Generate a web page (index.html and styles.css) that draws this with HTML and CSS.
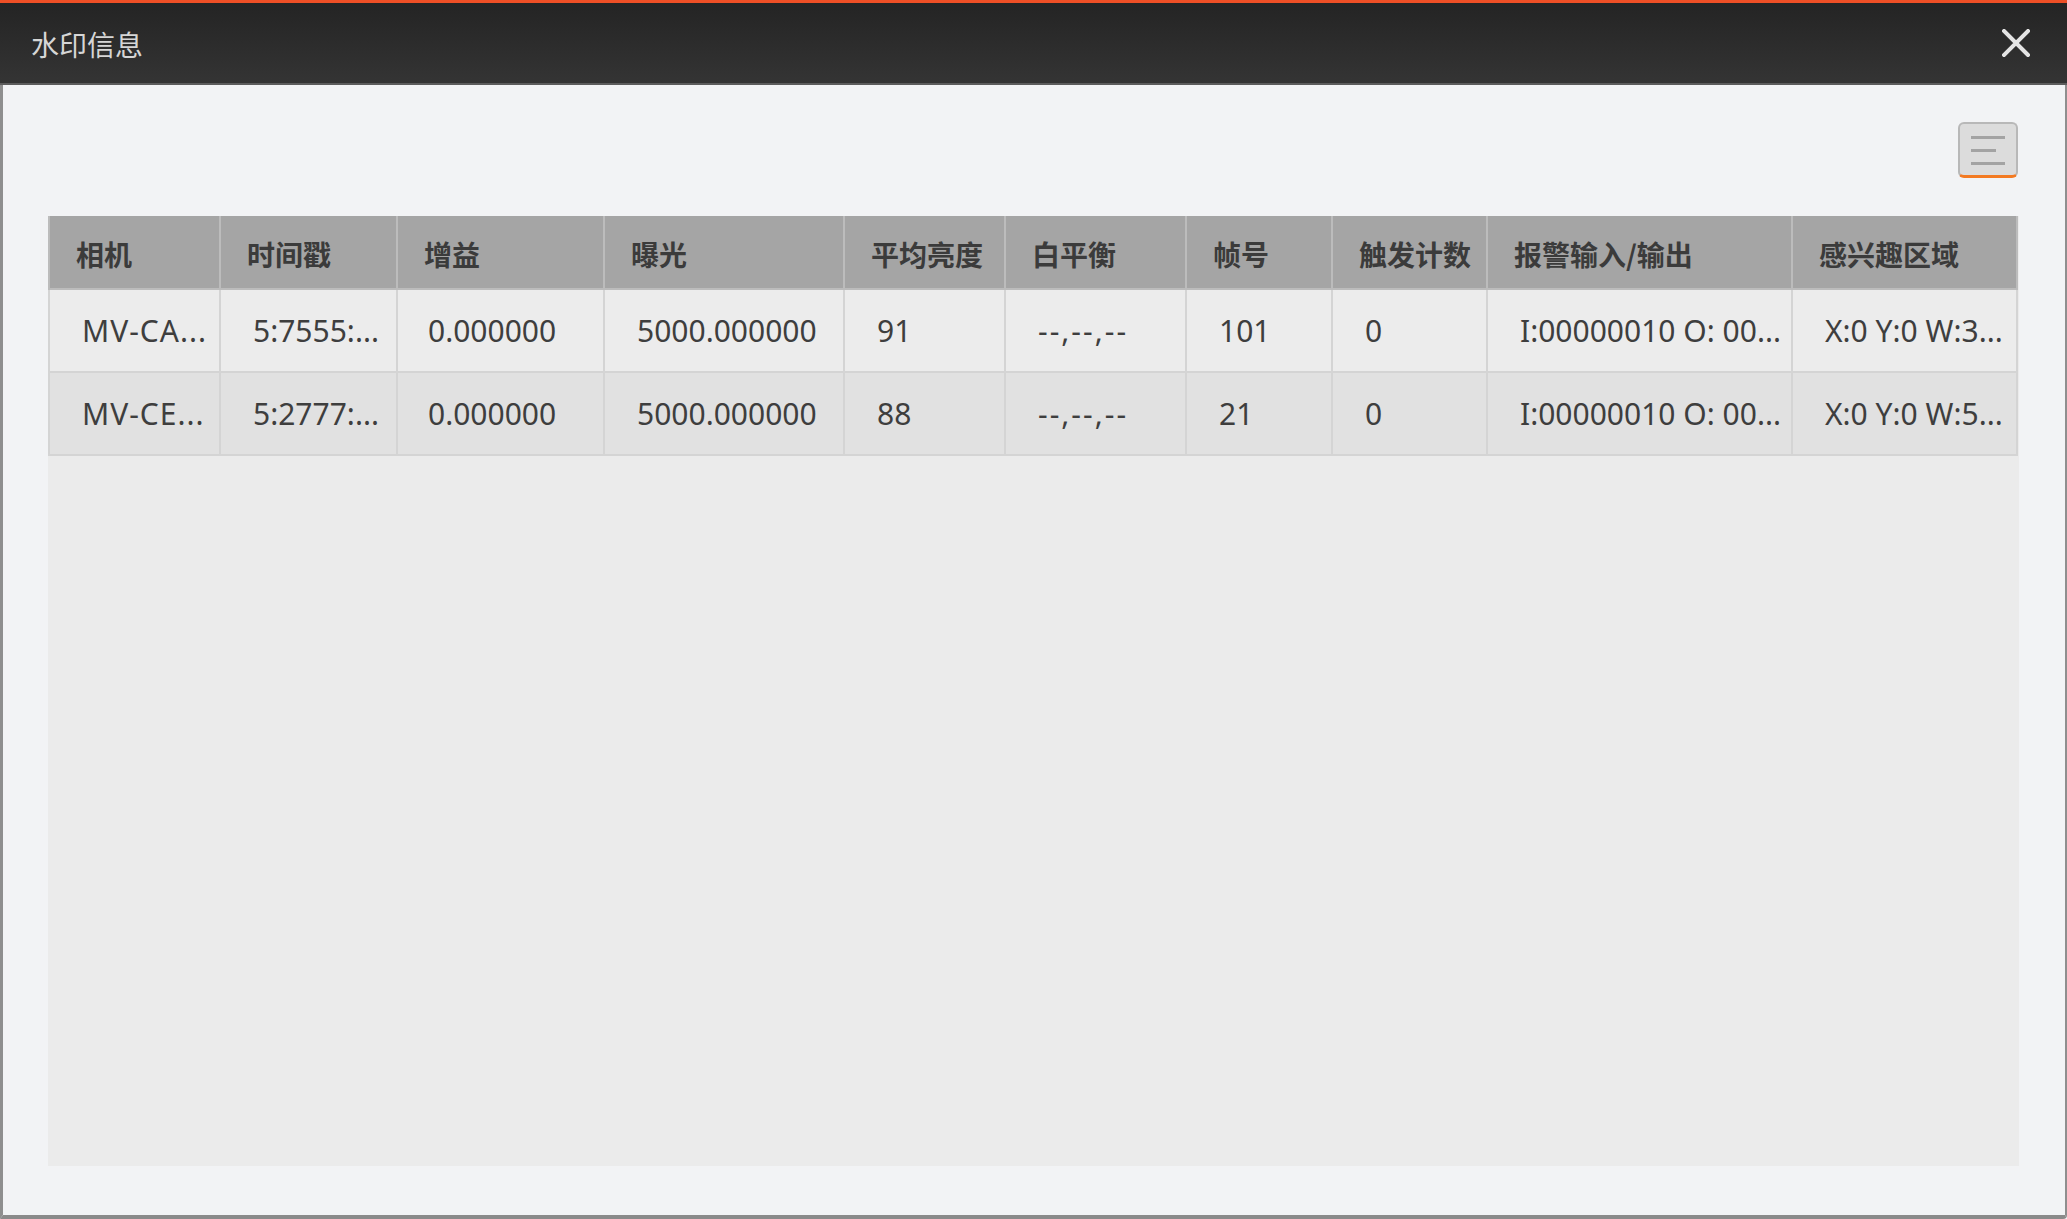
FILE: index.html
```html
<!DOCTYPE html>
<html lang="zh">
<head>
<meta charset="utf-8">
<title>水印信息</title>
<link rel="stylesheet" href="styles.css">
</head>
<body>
<div class="window">
  <div class="titlebar">
    <span class="title">水印信息</span>
    <button class="close" aria-label="关闭">
      <svg width="28" height="28" viewBox="0 0 28 28"><path d="M2 2 L26 26 M26 2 L2 26" stroke="#e4e4e4" stroke-width="4" stroke-linecap="square" fill="none"/></svg>
    </button>
  </div>
  <div class="content">
    <div class="toolbar">
      <button class="menu-btn" aria-label="菜单">
        <svg width="36" height="30" viewBox="0 0 36 30"><path d="M1 2.5 H35 M1 15.5 H26 M1 28.5 H35" stroke="#a3a3a3" stroke-width="3" fill="none"/></svg>
      </button>
    </div>
    <div class="grid-area">
      <table class="grid">
        <colgroup>
          <col class="c1"><col class="c2"><col class="c3"><col class="c4"><col class="c5">
          <col class="c6"><col class="c7"><col class="c8"><col class="c9"><col class="c10">
        </colgroup>
        <thead>
          <tr>
            <th>相机</th><th>时间戳</th><th>增益</th><th>曝光</th><th>平均亮度</th>
            <th>白平衡</th><th>帧号</th><th>触发计数</th><th>报警输入/输出</th><th>感兴趣区域</th>
          </tr>
        </thead>
        <tbody>
          <tr class="odd">
            <td class="wide">MV-CA...</td><td>5:7555:...</td><td class="tight">0.000000</td><td>5000.000000</td><td>91</td>
            <td class="dashes">--,--,--</td><td>101</td><td>0</td><td>I:00000010 O: 00...</td><td>X:0 Y:0 W:3...</td>
          </tr>
          <tr class="even">
            <td class="wide">MV-CE...</td><td>5:2777:...</td><td class="tight">0.000000</td><td>5000.000000</td><td>88</td>
            <td class="dashes">--,--,--</td><td>21</td><td>0</td><td>I:00000010 O: 00...</td><td>X:0 Y:0 W:5...</td>
          </tr>
        </tbody>
      </table>
    </div>
  </div>
</div>
</body>
</html>
```

FILE: styles.css
```css
* { box-sizing: border-box; }

html, body {
  margin: 0;
  padding: 0;
  height: 100%;
  background: #f2f3f5;
}

.window {
  height: 100vh;
  display: flex;
  flex-direction: column;
  font-family: "Noto Sans", "Noto Sans CJK SC", sans-serif;
}

.titlebar {
  height: 85px;
  flex: none;
  border-top: 3px solid #ee4f26;
  border-bottom: 2px solid #5c5c5c;
  background: linear-gradient(#242424, #343434);
  display: flex;
  align-items: center;
  justify-content: space-between;
  padding: 0 37px 0 31px;
}

.title {
  font-family: "Noto Sans CJK SC", sans-serif;
  font-size: 28px;
  color: #d6d6d6;
  line-height: 1;
  margin-top: 1px;
}

.close {
  border: 0;
  background: transparent;
  padding: 0;
  width: 28px;
  height: 28px;
  display: flex;
}

.content {
  flex: 1;
  display: flex;
  flex-direction: column;
  border-left: 3px solid #8e8e8e;
  border-right: 2px solid #8e8e8e;
  border-bottom: 4px solid #8a8a8a;
  border-bottom-right-radius: 4px;
  padding: 37px 46px 49px 45px;
  background: #f2f3f5;
}

.toolbar {
  display: flex;
  justify-content: flex-end;
  padding-right: 1px;
  margin-bottom: 38px;
}

.menu-btn {
  width: 60px;
  height: 56px;
  border: 2px solid #b8b8b8;
  border-bottom: 3px solid #f37a22;
  border-radius: 6px;
  background: #dcdcdc;
  padding: 0;
  display: flex;
  align-items: center;
  justify-content: center;
}

.grid-area {
  flex: 1;
  background: #ebebeb;
}

.grid {
  width: 1968px;
  table-layout: fixed;
  border-collapse: collapse;
}

.c1 { width: 171px; }
.c2 { width: 177px; }
.c3 { width: 207px; }
.c4 { width: 240px; }
.c5 { width: 161px; }
.c6 { width: 181px; }
.c7 { width: 146px; }
.c8 { width: 155px; }
.c9 { width: 305px; }
.c10 { width: 225px; }

.grid th {
  height: 73px;
  background: #a5a5a5;
  border: 2px solid #bcbcbc;
  border-top: 0;
  text-align: left;
  padding: 3px 0 0 26px;
  font-family: "Noto Sans CJK SC", sans-serif;
  font-weight: 700;
  font-size: 28px;
  color: #3b3b3b;
  white-space: nowrap;
  overflow: hidden;
}

.grid td {
  height: 83px;
  border: 2px solid #d4d4d4;
  padding: 0 0 0 32px;
  font-family: "Noto Sans", sans-serif;
  font-size: 30px;
  color: #3e3e3e;
  white-space: nowrap;
  overflow: hidden;
}

.grid td.tight { padding-left: 30px; }
.grid td.wide { letter-spacing: 1px; }
.grid td.dashes { letter-spacing: 2px; }

.grid tr.odd td { background: #ececec; }
.grid tr.even td { background: #e1e1e1; }
```
